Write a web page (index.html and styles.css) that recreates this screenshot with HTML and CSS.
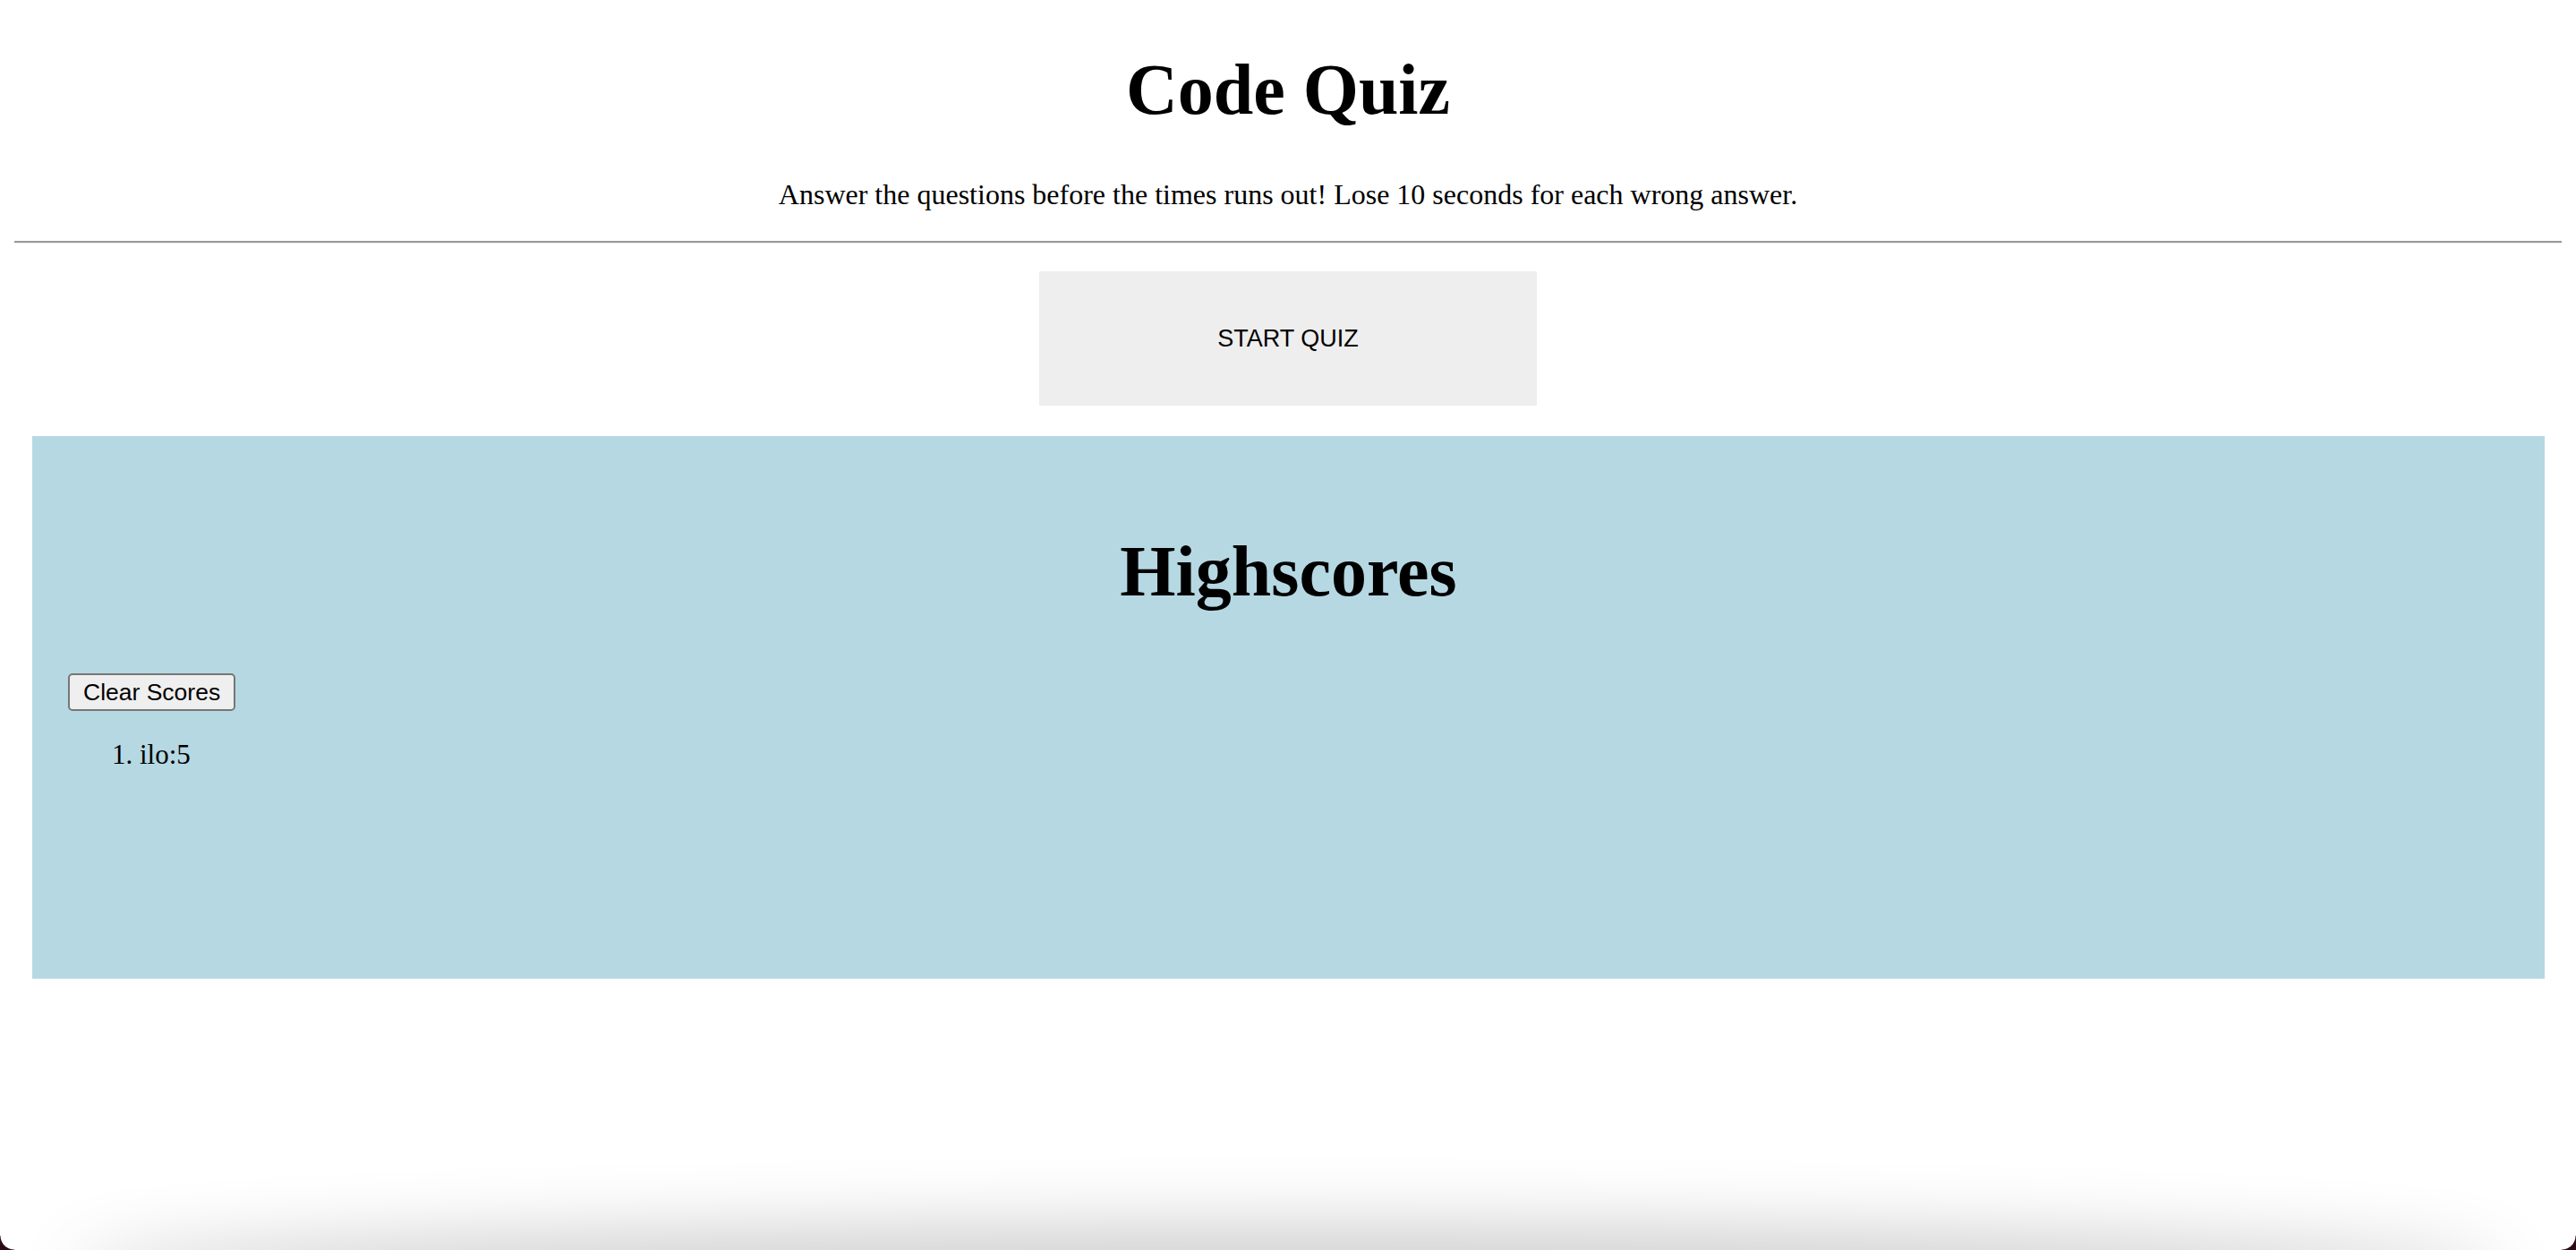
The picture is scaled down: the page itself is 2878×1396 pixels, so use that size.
FILE: index.html
```html
<!DOCTYPE html>
<html lang="en">
<head>
<meta charset="utf-8">
<title>Code Quiz</title>
<link rel="stylesheet" href="styles.css">
</head>
<body>
  <header class="intro">
    <h1 class="title">Code Quiz</h1>
    <p class="lead">Answer the questions before the times runs out! Lose 10 seconds for each wrong answer.</p>
  </header>
  <hr class="rule">
  <div class="start-row">
    <button class="start-btn" type="button">START QUIZ</button>
  </div>
  <section class="scores">
    <h1 class="scores-title">Highscores</h1>
    <button class="clear-btn" type="button">Clear Scores</button>
    <ol class="score-list">
      <li>ilo:5</li>
    </ol>
  </section>
  <div class="shade" aria-hidden="true"></div>
  <div class="corner corner-left" aria-hidden="true"></div>
  <div class="corner corner-right" aria-hidden="true"></div>
</body>
</html>
```
FILE: styles.css
```css
html {
  background: #ffffff;
}

body {
  margin: 0;
  background: #ffffff;
  color: #000000;
  font-family: "Liberation Serif", "Times New Roman", Times, serif;
  font-size: 31px;
  line-height: 36px;
  min-height: 1396px;
  overflow: hidden;
}

.intro {
  text-align: center;
  padding-top: 55px;
}

.title {
  margin: 0 0 54px 0;
  font-size: 80px;
  line-height: 90px;
  font-weight: bold;
}

.lead {
  margin: 0;
  font-size: 32px;
}

.rule {
  margin: 34px 16px 0 16px;
  height: 0;
  border: 0;
  border-top: 2px solid #9a9a9a;
  border-bottom: 1px solid #ececec;
}

.start-row {
  display: flex;
  justify-content: center;
  padding-top: 31px;
}

.start-btn {
  width: 556px;
  height: 150px;
  margin: 0;
  border: 0;
  background: #eeeeee;
  color: #000000;
  font-family: "Liberation Sans", Arial, Helvetica, sans-serif;
  font-size: 27px;
  padding: 0;
}

.scores {
  box-sizing: border-box;
  height: 606px;
  margin: 34px 35px 0 36px;
  padding: 106px 39px 0 39px;
  background: #b6d8e3;
}

.scores-title {
  margin: 0 0 69px 0;
  text-align: center;
  font-size: 80px;
  line-height: 90px;
  font-weight: bold;
}

.clear-btn {
  display: block;
  box-sizing: border-box;
  height: 42px;
  margin: 0 0 0 1px;
  padding: 0 15px;
  border: 2px solid #767676;
  border-radius: 5px;
  background: #efefef;
  color: #000000;
  font-family: "Liberation Sans", Arial, Helvetica, sans-serif;
  font-size: 26.5px;
  line-height: 36px;
}

.score-list {
  margin: 31px 0 0 0;
  padding-left: 81px;
}

.shade {
  position: fixed;
  left: 90px;
  right: 90px;
  bottom: -70px;
  height: 70px;
  box-shadow: 0 -10px 80px 16px rgba(0, 0, 0, 0.2);
  background: #cfcfcf;
  border-radius: 50%;
}

.corner {
  position: fixed;
  bottom: 0;
  width: 16px;
  height: 16px;
}

.corner-left {
  left: 0;
  background: radial-gradient(circle at 100% 0, transparent 15px, #2b0b12 16px);
}

.corner-right {
  right: 0;
  background: radial-gradient(circle at 0 0, transparent 15px, #2b0b12 16px);
}
```
